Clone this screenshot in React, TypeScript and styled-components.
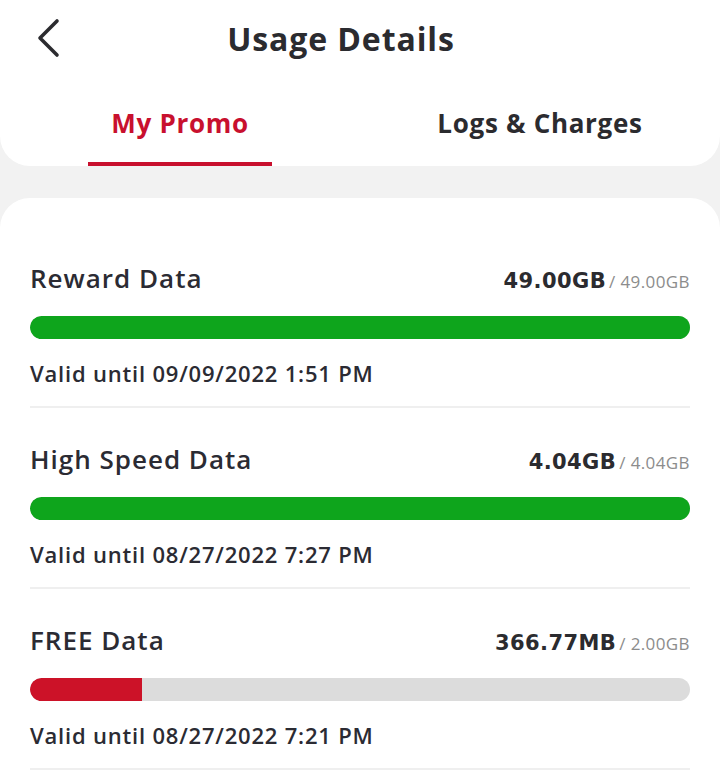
import React from 'react';
import styled, { createGlobalStyle } from 'styled-components';

const GlobalStyle = createGlobalStyle`
  html, body {
    margin: 0;
    padding: 0;
    background: #f2f2f2;
    font-family: 'Open Sans', 'Liberation Sans', sans-serif;
    color: #2b2b33;
  }
`;

const Page = styled.div`
  width: 720px;
  height: 784px;
  overflow: hidden;
  background: #f2f2f2;
  display: flex;
  flex-direction: column;
`;

const Header = styled.header`
  background: #fff;
  border-radius: 0 0 30px 30px;
`;

const TitleBar = styled.div`
  height: 76px;
  display: flex;
  align-items: center;
  justify-content: center;
  padding-right: 38px;
  position: relative;
`;

const BackButton = styled.button`
  position: absolute;
  left: 28px;
  top: 16px;
  width: 40px;
  height: 44px;
  border: none;
  background: none;
  padding: 0;
  display: flex;
  align-items: center;
  justify-content: center;
`;

const Title = styled.h1`
  margin: 0;
  font-size: 32px;
  font-weight: 700;
  letter-spacing: 0.9px;
  color: #2b2b2f;
`;

const Tabs = styled.nav`
  display: grid;
  grid-template-columns: 1fr 1fr;
  height: 90px;
`;

const Tab = styled.div`
  display: flex;
  justify-content: center;
`;

const TabLabel = styled.div<{ $active?: boolean }>`
  display: flex;
  align-items: center;
  justify-content: center;
  width: 184px;
  font-size: 26px;
  font-weight: 700;
  letter-spacing: 0.7px;
  color: ${(p) => (p.$active ? '#c8102e' : '#2b2b2f')};
  border-bottom: 4px solid ${(p) => (p.$active ? '#c8102e' : 'transparent')};
  box-sizing: border-box;
  padding-top: 7px;
  white-space: nowrap;
`;

const Card = styled.section`
  flex: 1;
  margin-top: 32px;
  background: #fff;
  border-radius: 30px 30px 0 0;
  padding: 44px 30px 0;
`;

const Item = styled.div`
  padding: 18px 0 0;
  border-bottom: 2px solid #efefef;
  height: 166px;
  box-sizing: border-box;
  & + & {
    margin-top: 15px;
  }
`;

const ItemHead = styled.div`
  display: flex;
  justify-content: space-between;
  align-items: baseline;
`;

const ItemName = styled.div`
  font-size: 26px;
  font-weight: 600;
  letter-spacing: 1px;
  color: #2b2b33;
`;

const Amount = styled.div`
  font-family: 'DejaVu Sans', 'Open Sans', sans-serif;
  font-size: 21px;
  font-weight: 700;
  letter-spacing: 0.4px;
  color: #2b2b2f;
`;

const Total = styled.span`
  font-family: 'Open Sans', sans-serif;
  font-size: 17px;
  font-weight: 500;
  letter-spacing: 0.4px;
  color: #8c8c8c;
  margin-left: 3px;
`;

const Track = styled.div`
  margin-top: 20px;
  height: 23px;
  border-radius: 12px;
  background: #dcdcdc;
  overflow: hidden;
`;

const Fill = styled.div<{ $color: string }>`
  height: 100%;
  background: ${(p) => p.$color};
  border-radius: 12px 0 0 12px;
`;

const Valid = styled.div`
  margin-top: 19px;
  font-size: 22px;
  font-weight: 600;
  letter-spacing: 0.8px;
  color: #2b2b33;
`;

const items = [
  { name: 'Reward Data', used: '49.00GB', total: '49.00GB', pct: 100, color: '#0ea51c', valid: 'Valid until 09/09/2022 1:51 PM' },
  { name: 'High Speed Data', used: '4.04GB', total: '4.04GB', pct: 100, color: '#0ea51c', valid: 'Valid until 08/27/2022 7:27 PM' },
  { name: 'FREE Data', used: '366.77MB', total: '2.00GB', pct: 17, color: '#cc1228', valid: 'Valid until 08/27/2022 7:21 PM' },
];

export default function App() {
  return (
    <Page>
      <GlobalStyle />
      <Header>
        <TitleBar>
          <BackButton aria-label="Back">
            <svg width="26" height="40" viewBox="0 0 26 40" fill="none">
              <path d="M22 3 L5 20 L22 37" stroke="#2b2b2f" strokeWidth="3.6" strokeLinecap="round" strokeLinejoin="round" />
            </svg>
          </BackButton>
          <Title>Usage Details</Title>
        </TitleBar>
        <Tabs>
          <Tab>
            <TabLabel $active>My Promo</TabLabel>
          </Tab>
          <Tab>
            <TabLabel>Logs &amp; Charges</TabLabel>
          </Tab>
        </Tabs>
      </Header>
      <Card>
        {items.map((it) => (
          <Item key={it.name}>
            <ItemHead>
              <ItemName>{it.name}</ItemName>
              <Amount>
                {it.used}
                <Total>/ {it.total}</Total>
              </Amount>
            </ItemHead>
            <Track>
              <Fill $color={it.color} style={{ width: `${it.pct}%` }} />
            </Track>
            <Valid>{it.valid}</Valid>
          </Item>
        ))}
      </Card>
    </Page>
  );
}
